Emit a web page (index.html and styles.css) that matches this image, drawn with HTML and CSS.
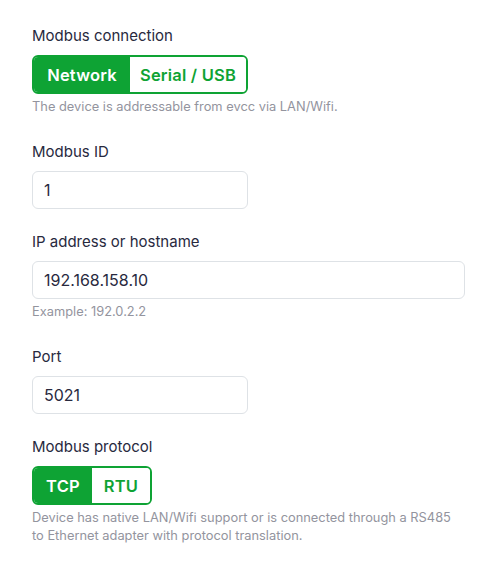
FILE: index.html
```html
<!DOCTYPE html>
<html lang="en">
<head>
<meta charset="utf-8">
<title>Modbus</title>
<link rel="stylesheet" href="styles.css">
</head>
<body>
<form class="form">
  <div class="group">
    <div class="label">Modbus connection</div>
    <div class="seg seg-conn">
      <span class="seg-item active">Network</span>
      <span class="seg-item">Serial / USB</span>
    </div>
    <div class="help">The device is addressable from evcc via LAN/Wifi.</div>
  </div>
  <div class="group">
    <label class="label" for="id">Modbus ID</label>
    <input class="input narrow" id="id" type="text" value="1">
  </div>
  <div class="group">
    <label class="label" for="host">IP address or hostname</label>
    <input class="input wide" id="host" type="text" value="192.168.158.10">
    <div class="help">Example: 192.0.2.2</div>
  </div>
  <div class="group">
    <label class="label" for="port">Port</label>
    <input class="input narrow" id="port" type="text" value="5021">
  </div>
  <div class="group">
    <div class="label">Modbus protocol</div>
    <div class="seg seg-proto">
      <span class="seg-item active">TCP</span>
      <span class="seg-item">RTU</span>
    </div>
    <div class="help">Device has native LAN/Wifi support or is connected through a RS485 to Ethernet adapter with protocol translation.</div>
  </div>
</form>
</body>
</html>
```
FILE: styles.css
```css
* { box-sizing: border-box; }
html, body { margin: 0; padding: 0; background: #fff; }
body {
  font-family: "Inter", "Open Sans", sans-serif;
  color: #28293e;
}
.form {
  padding: 25px 31px 0 32px;
  display: flex;
  flex-direction: column;
  gap: 22px;
}
.group { display: flex; flex-direction: column; align-items: flex-start; }
.label {
  display: block;
  font-size: 15px;
  line-height: 22px;
  margin-bottom: 8px;
  color: #28293e;
}
.seg {
  display: inline-flex;
  border: 2px solid #0ea334;
  border-radius: 6px;
  overflow: hidden;
  height: 39px;
}
.seg-item {
  display: flex;
  align-items: center;
  justify-content: center;
  font-size: 16.5px;
  font-weight: 600;
  letter-spacing: 0.2px;
  color: #0ea334;
  background: #fff;
}
.seg-item.active { background: #0ea334; color: #fff; }
.seg-conn .seg-item:first-child { width: 96px; }
.seg-conn .seg-item:last-child { width: 116px; }
.seg-proto .seg-item { width: 58px; }
.help {
  margin-top: 4px;
  margin-bottom: 3px;
  max-width: 430px;
  font-size: 12.85px;
  line-height: 18px;
  color: #93949e;
}
.input {
  height: 38px;
  border: 1px solid #dee2e6;
  border-radius: 6px;
  padding: 0 11px;
  font-family: inherit;
  font-size: 16px;
  color: #28293e;
  background: #fff;
  outline: none;
}
.narrow { width: 216px; }
.wide { width: 433px; }
```
